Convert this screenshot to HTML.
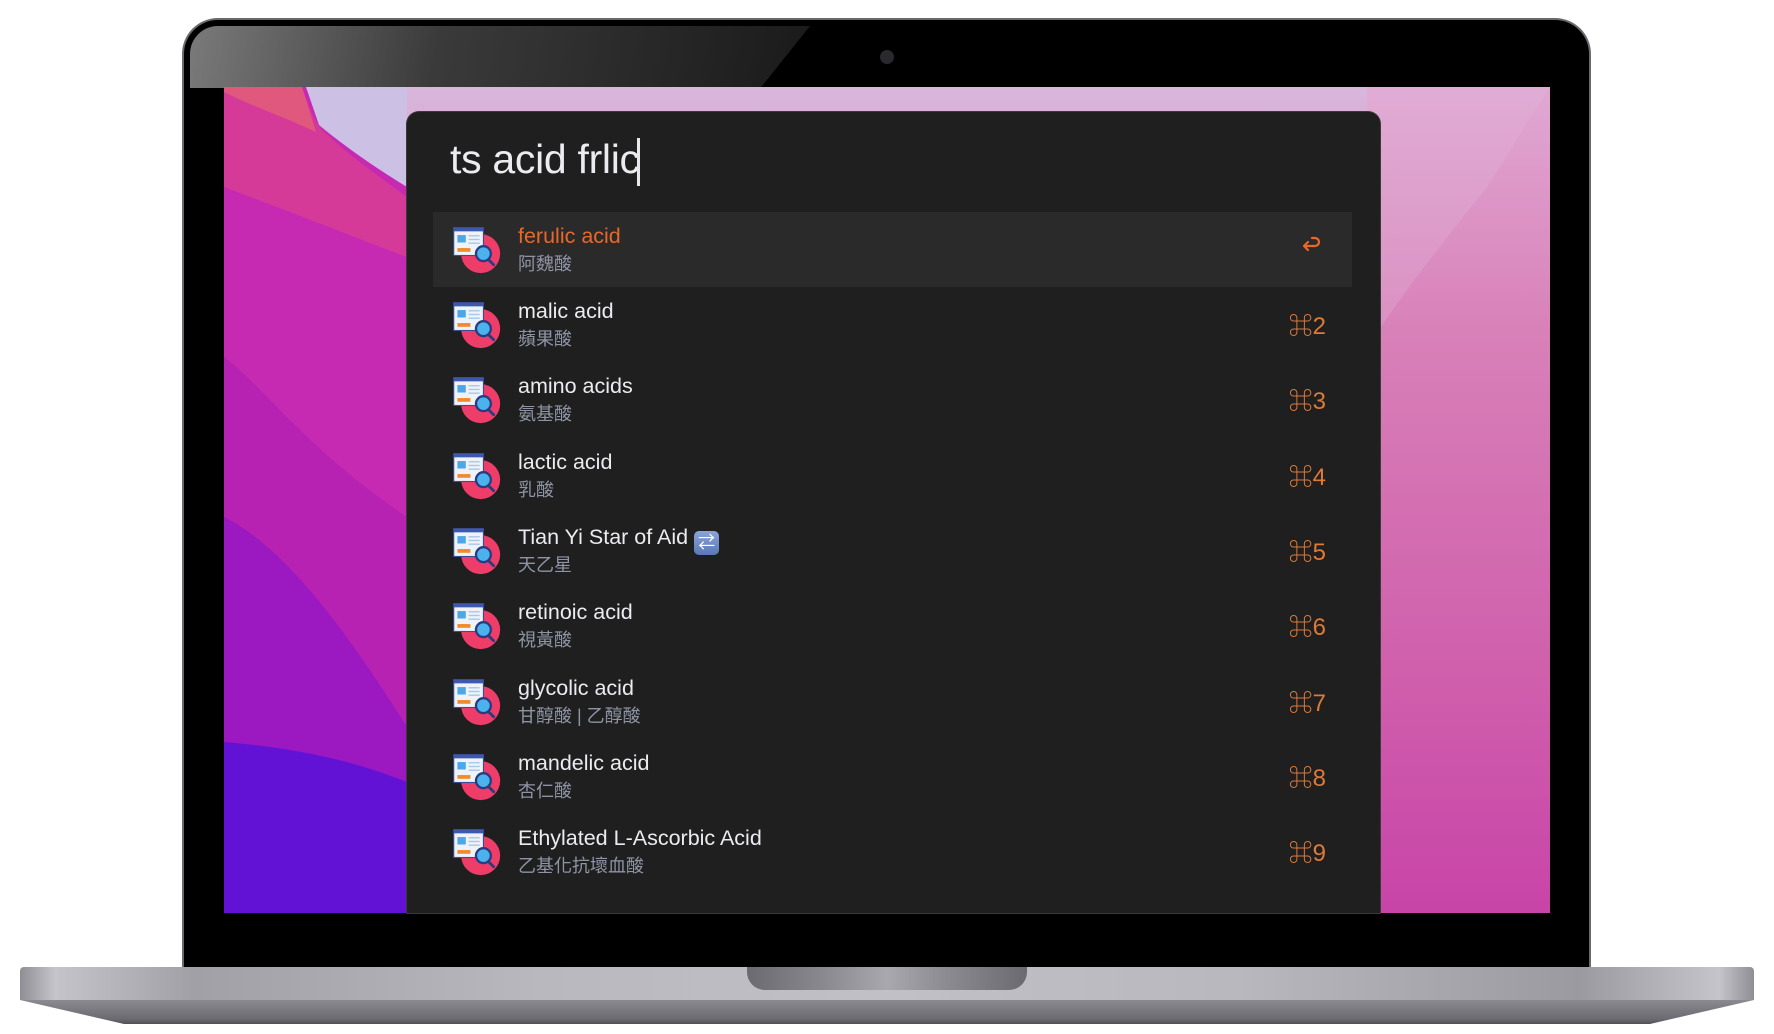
<!DOCTYPE html>
<html><head><meta charset="utf-8"><style>
html,body{margin:0;padding:0;background:#fff;width:1774px;height:1034px;overflow:hidden;position:relative;font-family:"Liberation Sans","Noto Sans CJK TC",sans-serif}
.abs{position:absolute}
#lid{left:184px;top:20px;width:1405px;height:960px;background:#000;border-radius:34px 34px 0 0;box-shadow:0 0 0 2px #6a6a6e}
#glare{left:190px;top:26px;width:620px;height:62px;background:linear-gradient(100deg,#7a7a7a 0%,#3a3a3a 40%,#1a1a1a 100%);clip-path:polygon(0 0,100% 0,92% 100%,0 100%);border-radius:28px 0 0 0}
#cam{left:880px;top:50px;width:14px;height:14px;border-radius:50%;background:#2a2a2e}
#screen{left:224px;top:87px;width:1326px;height:826px;background:linear-gradient(180deg,#d9b6dc 0%,#d88ec4 25%,#d46ab0 55%,#cc4aa8 100%);overflow:hidden}
#base{left:20px;top:967px;width:1734px;height:33px;background:linear-gradient(90deg,#8e8e94 0%,#c4c4ca 2%,#a0a0a6 10%,#b8b8be 30%,#c0c0c6 50%,#b8b8be 70%,#9a9aa0 90%,#c4c4ca 98%,#8e8e94 100%);border-radius:4px 4px 0 0}
#base2{left:20px;top:1000px;width:1734px;height:24px;background:linear-gradient(180deg,#8a8a90,#6a6a70 80%,#505056);clip-path:polygon(0 0,100% 0,94% 100%,6% 100%)}
#notch{left:747px;top:967px;width:280px;height:23px;background:linear-gradient(90deg,#6a6a70,#8c8c92 30%,#a8a8ae 50%,#8c8c92 70%,#6a6a70);border-radius:0 0 18px 18px}
#panel{left:407px;top:112px;width:973px;height:801px;background:#1f1f1f;border-radius:12px 12px 0 0;box-shadow:0 0 0 1px #3a3a3a}
#q{left:450px;top:136px;font-size:41px;color:#ececf0;letter-spacing:-0.3px}
#caret{left:637px;top:138px;width:3px;height:48px;background:#e8e8ec}
.row{position:absolute;left:433px;width:919px;height:75px}
.row.sel{background:#2a2a2a}
.ic{position:absolute;left:17px;top:11px;width:52px;height:52px}
.t{position:absolute;left:85px;top:12px;font-size:21.5px;color:#ebebf0;white-space:nowrap}
.s{position:absolute;left:85px;top:38px;font-size:18px;color:#8e94a4;white-space:nowrap}
.k{position:absolute;right:26px;top:19px;font-size:24px;color:#de7a38}
</style></head><body>
<div id="lid" class="abs"></div>
<div id="glare" class="abs"></div>
<div id="cam" class="abs"></div>
<div id="screen" class="abs">
<svg width="183" height="826" style="position:absolute;left:0;top:0">
<rect width="183" height="826" fill="#c62ab2"/>
<path d="M0 0H183V100C150 80 115 55 95 38L82 0Z" fill="#ccc0e4"/>
<path d="M0 0H78C85 20 90 33 97 42C122 66 150 86 183 110V170C130 150 80 130 0 100Z" fill="#d63a98"/>
<path d="M0 0H78L92 45C60 30 30 20 0 5Z" fill="#e0587e"/>
<path d="M0 270C40 300 80 360 183 430V826H0Z" fill="#b722b2"/>
<path d="M0 430C60 460 120 540 183 640V826H0Z" fill="#9c18c0"/>
<path d="M0 655C60 660 120 670 183 695V826H0Z" fill="#6212d4"/>
</svg>
<svg width="183" height="826" style="position:absolute;left:1143px;top:0">
<defs><linearGradient id="g" x1="0" y1="0" x2="0" y2="1"><stop offset="0" stop-color="#e0a8d2"/><stop offset="0.3" stop-color="#d880b8"/><stop offset="0.7" stop-color="#d060ac"/><stop offset="1" stop-color="#c844a8"/></linearGradient></defs>
<rect width="183" height="826" fill="url(#g)"/>
<path d="M100 0H183V0L120 100C80 150 40 200 0 260V0Z" fill="#e2b6dc" opacity="0.3"/>
</svg>
</div>
<div id="panel" class="abs"></div>
<div id="q" class="abs">ts acid frlic</div>
<div id="caret" class="abs"></div>

<svg width="0" height="0" style="position:absolute"><defs>
<g id="icon">
<circle cx="33" cy="33" r="21" fill="#ef3d6a"/>
<rect x="4" y="5" width="32" height="30" fill="#eef3f9" stroke="#3c4c94" stroke-width="1.2"/>
<rect x="4" y="5" width="32" height="4" fill="#3e58b0"/>
<rect x="8" y="13" width="9" height="8" fill="#4ba6ea"/>
<rect x="20" y="13" width="12" height="1.5" fill="#a8c8e8"/>
<rect x="20" y="17" width="12" height="1.5" fill="#a8c8e8"/>
<rect x="20" y="21" width="12" height="1.5" fill="#a8c8e8"/>
<rect x="8" y="27" width="14" height="4" fill="#f2892c"/>
<line x1="41" y1="39" x2="47" y2="45" stroke="#2a3c80" stroke-width="3" stroke-linecap="round"/>
<circle cx="36" cy="33" r="8" fill="#4cb2ee" stroke="#2a3c80" stroke-width="2.5"/>
</g></defs></svg>

<div class="row sel" style="top:212px"><svg class="ic" viewBox="0 0 56 56"><use href="#icon"/></svg><div class="t" style="color:#e8682a">ferulic acid</div><div class="s">阿魏酸</div><div class="k" style="right:30px;top:22px"><svg width="22" height="20" viewBox="0 0 22 20"><path d="M12 3h3a4 4 0 0 1 0 8H4M8 7l-4 4 4 4" fill="none" stroke="#e8682a" stroke-width="2.2" stroke-linecap="round" stroke-linejoin="round"/></svg></div></div>
<div class="row" style="top:287px"><svg class="ic" viewBox="0 0 56 56"><use href="#icon"/></svg><div class="t">malic acid</div><div class="s">蘋果酸</div><div class="k">⌘2</div></div>
<div class="row" style="top:362px"><svg class="ic" viewBox="0 0 56 56"><use href="#icon"/></svg><div class="t">amino acids</div><div class="s">氨基酸</div><div class="k">⌘3</div></div>
<div class="row" style="top:438px"><svg class="ic" viewBox="0 0 56 56"><use href="#icon"/></svg><div class="t">lactic acid</div><div class="s">乳酸</div><div class="k">⌘4</div></div>
<div class="row" style="top:513px"><svg class="ic" viewBox="0 0 56 56"><use href="#icon"/></svg><div class="t">Tian Yi Star of Aid <span style="display:inline-block;width:25px;height:24px;border-radius:5px;background:linear-gradient(#8aa4d8,#5a78b8);vertical-align:-4px;text-align:center;line-height:24px;font-size:17px;color:#fff">⇄</span></div><div class="s">天乙星</div><div class="k">⌘5</div></div>
<div class="row" style="top:588px"><svg class="ic" viewBox="0 0 56 56"><use href="#icon"/></svg><div class="t">retinoic acid</div><div class="s">視黃酸</div><div class="k">⌘6</div></div>
<div class="row" style="top:664px"><svg class="ic" viewBox="0 0 56 56"><use href="#icon"/></svg><div class="t">glycolic acid</div><div class="s">甘醇酸 | 乙醇酸</div><div class="k">⌘7</div></div>
<div class="row" style="top:739px"><svg class="ic" viewBox="0 0 56 56"><use href="#icon"/></svg><div class="t">mandelic acid</div><div class="s">杏仁酸</div><div class="k">⌘8</div></div>
<div class="row" style="top:814px"><svg class="ic" viewBox="0 0 56 56"><use href="#icon"/></svg><div class="t">Ethylated L-Ascorbic Acid</div><div class="s">乙基化抗壞血酸</div><div class="k">⌘9</div></div>

<div id="base" class="abs"></div>
<div id="base2" class="abs"></div>
<div id="notch" class="abs"></div>
</body></html>
